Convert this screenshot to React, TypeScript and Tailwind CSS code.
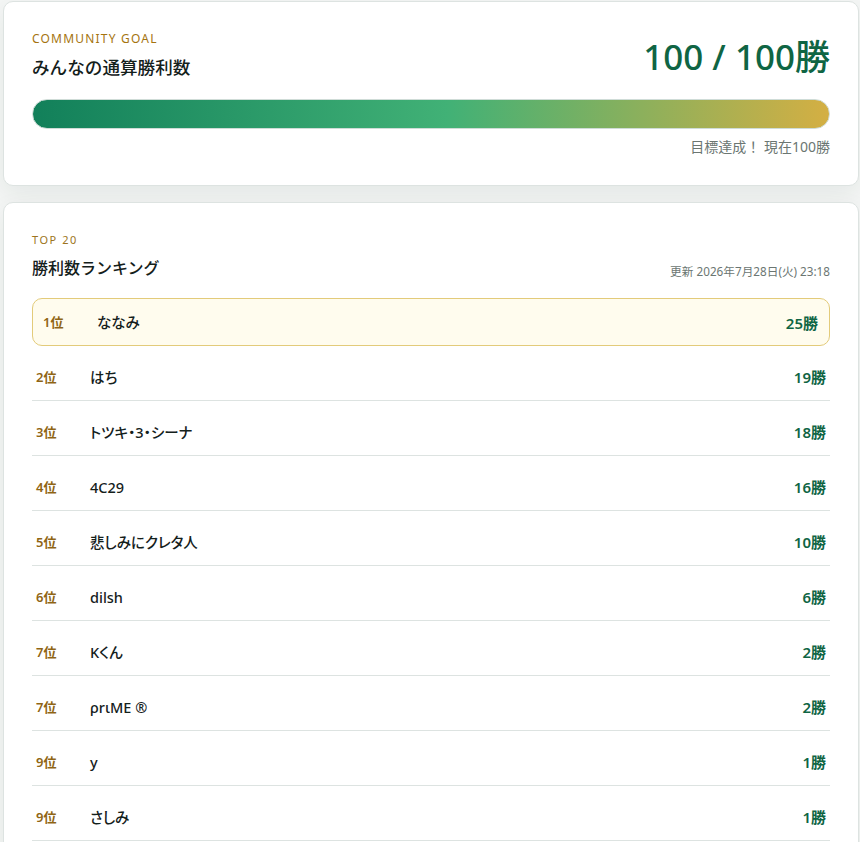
const ROWS = [
  { rank: '2位', name: 'はち', wins: '19勝' },
  { rank: '3位', name: 'トツキ・3・シーナ', wins: '18勝' },
  { rank: '4位', name: '4C29', wins: '16勝' },
  { rank: '5位', name: '悲しみにクレタ人', wins: '10勝' },
  { rank: '6位', name: 'dilsh', wins: '6勝' },
  { rank: '7位', name: 'Kくん', wins: '2勝' },
  { rank: '7位', name: 'ρrιME ®', wins: '2勝' },
  { rank: '9位', name: 'y', wins: '1勝' },
  { rank: '9位', name: 'さしみ', wins: '1勝' },
];

export default function App() {
  return (
    <div className="h-[842px] overflow-hidden bg-[#f4f6f5] pl-[3px] pr-px pt-px text-[#14201b] font-['Noto_Sans','Noto_Sans_CJK_JP',sans-serif]">
      {/* community goal */}
      <section className="h-[185px] rounded-[10px] border border-[#dde3e1] bg-white px-[28px] pt-[28px] shadow-[0_8px_24px_rgba(20,40,30,0.07)]">
        <div className="flex h-[69px] items-start justify-between">
          <div>
            <p className="text-[12px] leading-[18px] tracking-[0.1em] text-[#a5740f]">COMMUNITY GOAL</p>
            <h2 className="mt-[6px] text-[17.6px] leading-[27px] font-medium">みんなの通算勝利数</h2>
          </div>
          <p className="mt-px text-[35px] leading-[52px] font-medium text-[#0f6544]">100 / 100勝</p>
        </div>
        <div className="h-[30px] rounded-full border border-[#cfdcd7] bg-[linear-gradient(90deg,#12805a,#41b176_52%,#d4af43)]" />
        <p className="mt-[8px] text-right text-[14px] leading-[20px] text-[#6b7672]">目標達成！ 現在100勝</p>
      </section>

      {/* ranking */}
      <section className="mt-[16px] rounded-[10px] border border-[#dde3e1] bg-white px-[28px] pb-[28px] pt-[28px] shadow-[0_8px_24px_rgba(20,40,30,0.07)]">
        <div className="flex items-end justify-between">
          <div>
            <p className="text-[11px] leading-[17px] tracking-[0.14em] text-[#9c7420]">TOP 20</p>
            <h2 className="mt-[7px] text-[16px] leading-[26px] font-medium">勝利数ランキング</h2>
          </div>
          <p className="mb-[1px] text-[11.7px] leading-[17px] text-[#6b7672]">更新 2026年7月28日(火) 23:18</p>
        </div>
        <div className="mt-[17px] flex h-[48px] items-center rounded-[10px] border border-[#e3cb7a] bg-[#fffcee] pl-[10px] pr-[11px] pt-[2px]">
          <span className="w-[54px] text-[13px] font-semibold text-[#8f6514]">1位</span>
          <span className="flex-1 text-[14.5px] font-medium [font-feature-settings:'palt']">ななみ</span>
          <span className="text-[15px] font-semibold text-[#0f6544]">25勝</span>
        </div>
        {ROWS.map((row, i) => (
          <div key={i} className="mt-[7px] flex h-[48px] items-center border-b border-[#dde3e1] px-[4px] pt-[2px]">
            <span className="w-[54px] text-[13px] font-semibold text-[#8f6514]">{row.rank}</span>
            <span className="flex-1 text-[14.5px] font-medium [font-feature-settings:'palt']">{row.name}</span>
            <span className="text-[15px] font-semibold text-[#0f6544]">{row.wins}</span>
          </div>
        ))}
      </section>
    </div>
  );
}
